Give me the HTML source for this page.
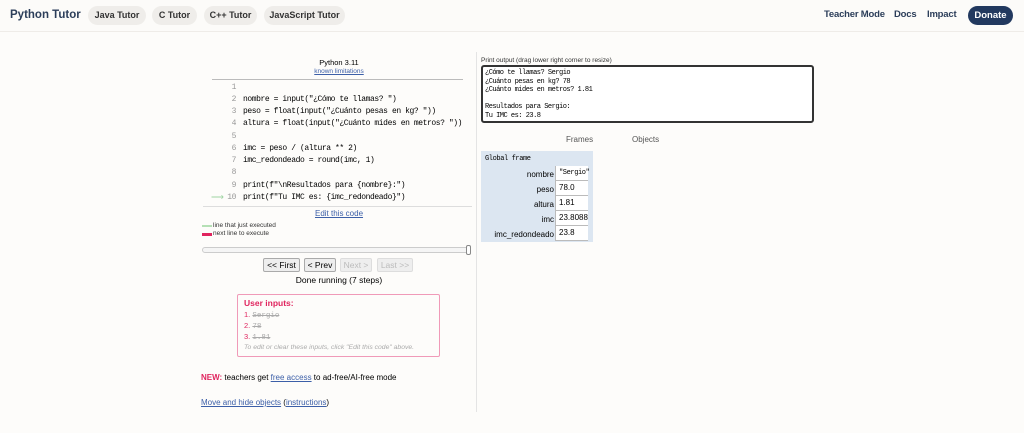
<!DOCTYPE html>
<html><head><meta charset="utf-8"><style>
*{margin:0;padding:0;box-sizing:border-box}
body{width:1024px;height:433px;background:#fdfcfa;font-family:"Liberation Sans",sans-serif;position:relative;overflow:hidden;color:#000}
.nav{position:absolute;left:0;top:0;width:1024px;height:32px;border-bottom:1px solid #efece8;background:#fcfbf9}
.a{position:absolute;font-size:10px}
.pill{position:absolute;top:6px;height:19px;border-radius:10px;background:#efedea;font-size:9px;font-weight:bold;color:#333;line-height:19px;text-align:center}
.nl{position:absolute;top:9px;font-size:9.5px;font-weight:bold;color:#2c3e5a;letter-spacing:-0.2px}
.mono{font-family:"Liberation Mono","DejaVu Sans Mono",monospace}
.ln{position:absolute;left:200px;width:36px;text-align:right;font-size:8px;color:#999;letter-spacing:-0.4px}
.cd{position:absolute;left:243px;font-size:8px;letter-spacing:-0.42px;color:#000;white-space:pre}
.lk{color:#3c5fa8;text-decoration:underline}
.btn{position:absolute;top:258px;height:14px;border:1px solid #aaa;border-radius:2px;background:#eee;font-size:8.5px;line-height:12px;text-align:center}
.v{position:absolute;left:555px;height:15px;width:33px;border-left:1px solid #bbb;border-bottom:1px solid #bbb;background:#fff;font-size:8px;line-height:14px;padding-left:3px}
.k{position:absolute;right:470px;font-size:8px;text-align:right}
</style></head><body>
<div class="nav">
<div class="a" style="left:10px;top:9px;font-size:11.5px;font-weight:bold;color:#2c3e5a">Python Tutor</div>
<div class="pill" style="left:88px;width:58px">Java Tutor</div>
<div class="pill" style="left:152px;width:45px">C Tutor</div>
<div class="pill" style="left:204px;width:53px">C++ Tutor</div>
<div class="pill" style="left:264px;width:81px">JavaScript Tutor</div>
<div class="nl" style="left:824px">Teacher Mode</div>
<div class="nl" style="left:894px">Docs</div>
<div class="nl" style="left:927px">Impact</div>
<div style="position:absolute;left:968px;top:6px;width:45px;height:19px;border-radius:10px;background:#22395f;color:#fff;font-size:9.5px;font-weight:bold;line-height:19px;text-align:center">Donate</div>
</div>
<div style="position:absolute;left:476px;top:52px;width:1px;height:360px;background:#e4e4e4"></div>
<div class="a" style="left:200px;width:278px;top:58px;text-align:center;font-size:7.5px">Python 3.11</div>
<div class="a lk" style="left:200px;width:278px;top:68px;text-align:center;font-size:6.5px">known limitations</div>
<div style="position:absolute;left:212px;top:79px;width:251px;height:1px;background:#bbb"></div>
<div class="ln mono" style="top:83px">1</div>
<div class="ln mono" style="top:95px">2</div><div class="cd mono" style="top:95px">nombre = input("¿Cómo te llamas? ")</div>
<div class="ln mono" style="top:107px">3</div><div class="cd mono" style="top:107px">peso = float(input("¿Cuánto pesas en kg? "))</div>
<div class="ln mono" style="top:119px">4</div><div class="cd mono" style="top:119px">altura = float(input("¿Cuánto mides en metros? "))</div>
<div class="ln mono" style="top:132px">5</div>
<div class="ln mono" style="top:144px">6</div><div class="cd mono" style="top:144px">imc = peso / (altura ** 2)</div>
<div class="ln mono" style="top:156px">7</div><div class="cd mono" style="top:156px">imc_redondeado = round(imc, 1)</div>
<div class="ln mono" style="top:168px">8</div>
<div class="ln mono" style="top:181px">9</div><div class="cd mono" style="top:181px">print(f"\nResultados para {nombre}:")</div>
<div class="ln mono" style="top:193px">10</div><div class="cd mono" style="top:193px">print(f"Tu IMC es: {imc_redondeado}")</div>
<div class="a" style="left:211px;top:192px;color:#9fd4a2;font-size:9px">⟶</div>
<div style="position:absolute;left:203px;top:206px;width:269px;height:1px;background:#ddd"></div>
<div class="a lk" style="left:200px;width:278px;top:209px;text-align:center;font-size:8px">Edit this code</div>
<div style="position:absolute;left:202px;top:225px;width:10px;height:2px;background:#b5e0b5"></div>
<div class="a" style="left:213px;top:222px;font-size:6.5px;color:#333">line that just executed</div>
<div style="position:absolute;left:202px;top:233px;width:10px;height:3px;background:#e0245e"></div>
<div class="a" style="left:213px;top:230px;font-size:6.5px;color:#333">next line to execute</div>
<div style="position:absolute;left:202px;top:247px;width:268px;height:6px;border:1px solid #ccc;border-radius:3px;background:#f5f5f5"></div>
<div style="position:absolute;left:466px;top:245px;width:5px;height:10px;border:1px solid #888;border-radius:2px;background:#fff"></div>
<div class="btn" style="left:263px;width:37px">&lt;&lt; First</div>
<div class="btn" style="left:304px;width:32px">&lt; Prev</div>
<div class="btn" style="left:340px;width:32px;color:#bbb;border-color:#ddd">Next &gt;</div>
<div class="btn" style="left:377px;width:36px;color:#bbb;border-color:#ddd">Last &gt;&gt;</div>
<div class="a" style="left:200px;width:278px;top:275px;text-align:center;font-size:8.5px">Done running (7 steps)</div>
<div style="position:absolute;left:237px;top:294px;width:203px;height:63px;border:1.5px solid #f09ab8;border-radius:2px"></div>
<div class="a" style="left:244px;top:298px;font-size:8.5px;font-weight:bold;color:#e0245e">User inputs:</div>
<div class="a" style="left:244px;top:310px;font-size:7.5px;color:#e0245e">1. <span class="mono" style="color:#aaa;text-decoration:line-through">Sergio</span></div>
<div class="a" style="left:244px;top:321px;font-size:7.5px;color:#e0245e">2. <span class="mono" style="color:#aaa;text-decoration:line-through">78</span></div>
<div class="a" style="left:244px;top:332px;font-size:7.5px;color:#e0245e">3. <span class="mono" style="color:#aaa;text-decoration:line-through">1.81</span></div>
<div class="a" style="left:244px;top:344px;font-size:6.8px;color:#aaa;font-style:italic">To edit or clear these inputs, click "Edit this code" above.</div>
<div class="a" style="left:201px;top:373px;font-size:8px"><b style="color:#e0245e">NEW:</b> teachers get <span class="lk">free access</span> to ad-free/AI-free mode</div>
<div class="a" style="left:201px;top:398px;font-size:8px"><span class="lk">Move and hide objects</span> (<span class="lk">instructions</span>)</div>
<div class="a" style="left:481px;top:57px;font-size:6.5px;color:#333">Print output (drag lower right corner to resize)</div>
<div class="mono" style="position:absolute;left:481px;top:65px;width:333px;height:58px;border:2px solid #333;border-radius:3px;padding:2px 2px;font-size:7px;letter-spacing:-0.5px;line-height:8.6px;white-space:pre;background:#fff">¿Cómo te llamas? Sergio
¿Cuánto pesas en kg? 78
¿Cuánto mides en metros? 1.81

Resultados para Sergio:
Tu IMC es: 23.8</div>
<div class="a" style="left:566px;top:135px;font-size:8px;color:#555">Frames</div>
<div class="a" style="left:632px;top:135px;font-size:8px;color:#555">Objects</div>
<div style="position:absolute;left:481px;top:151px;width:112px;height:91px;background:#dce6f1"></div>
<div class="a mono" style="left:485px;top:155px;font-size:7px;letter-spacing:-0.4px">Global frame</div>
<div class="k" style="top:170px">nombre</div><div class="v mono" style="top:166px;font-size:7px;letter-spacing:-0.4px">"Sergio"</div>
<div class="k" style="top:185px">peso</div><div class="v" style="top:181px">78.0</div>
<div class="k" style="top:200px">altura</div><div class="v" style="top:196px">1.81</div>
<div class="k" style="top:215px">imc</div><div class="v" style="top:211px">23.8088</div>
<div class="k" style="top:230px">imc_redondeado</div><div class="v" style="top:226px">23.8</div>
</body></html>
